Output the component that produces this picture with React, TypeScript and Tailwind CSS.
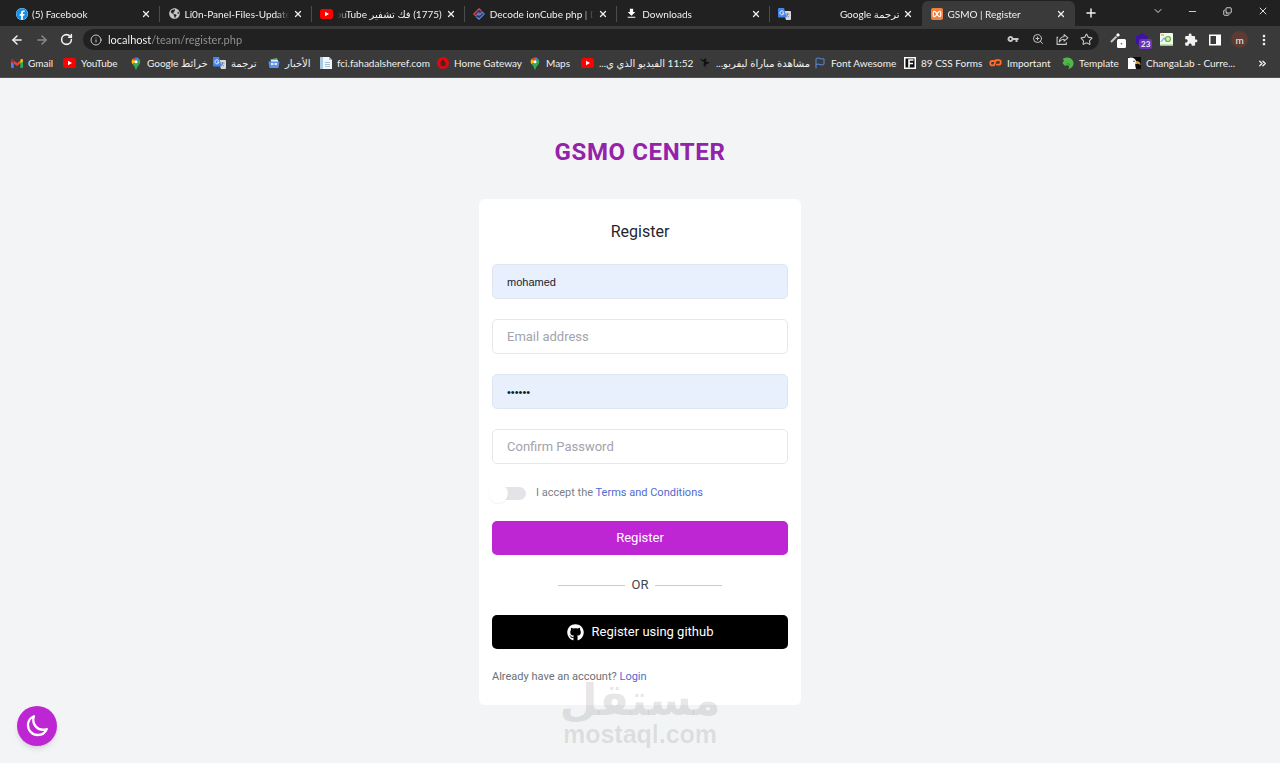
import React from "react";
import {
  ArrowLeft,
  ArrowRight,
  ChevronDown,
  ChevronsRight,
  Copy,
  Info,
  Minus,
  Plus,
  RotateCw,
  Star,
  X,
  ZoomIn,
  Flag,
} from "lucide-react";
import { FaFacebook, FaGithub, FaGlobeAmericas } from "react-icons/fa";
import { MdExtension, MdFileDownload, MdMoreVert, MdVpnKey } from "react-icons/md";

const Facebook = () => (
  <span className="flex size-3 rounded-full bg-white">
    <FaFacebook className="size-3 text-[#1490ea]" />
  </span>
);

const Youtube = () => (
  <svg viewBox="0 0 13 10" className="h-[10px] w-[13px]">
    <rect width="13" height="10" rx="2.6" fill="#f00" />
    <path d="M5 2.8v4.4L9 5z" fill="#fff" />
  </svg>
);

const Translate = () => (
  <svg viewBox="0 0 13 12" className="h-3 w-[13px]">
    <path d="M5 3h7a1 1 0 0 1 1 1v7a1 1 0 0 1-1 1H8z" fill="#d6dae0" />
    <path d="M7.5 6h4M9.5 5v1c0 1.5-1 2.5-2 3M8.5 7c.5 1 1.5 1.700 2.5 2" stroke="#6c7a90" strokeWidth=".8" fill="none" />
    <path d="M1 0h5l2.7 9.5H1a1 1 0 0 1-1-1V1a1 1 0 0 1 1-1z" fill="#4583ee" />
    <path d="M5.6 3.6A2 2 0 1 0 6 5H4.2" stroke="#fff" strokeWidth=".9" fill="none" />
  </svg>
);

const IonCube = () => (
  <svg viewBox="0 0 12 12" className="size-3">
    <path d="M6 .5 11.5 6 6 11.5.5 6z" fill="#27376b" />
    <path d="M8.5 3 6 .8.8 6l2 2L6 4.800l2 2" stroke="#d4474e" strokeWidth="1.2" fill="none" />
    <path d="M3.5 9 6 11.2 11.2 6l-2-2L6 7.2l-2-2" stroke="#4d8be0" strokeWidth="1.2" fill="none" />
  </svg>
);

const Xampp = () => (
  <svg viewBox="0 0 12 12" className="size-3">
    <rect width="12" height="12" rx="2" fill="#f0803c" />
    <path
      d="M3.8 3.3h-.3a1.2 1.2 0 0 0-1.2 1.2v3A1.2 1.2 0 0 0 3.5 8.7h.3L6 6.5l2.2 2.2h.3a1.2 1.2 0 0 0 1.2-1.2v-3a1.2 1.2 0 0 0-1.2-1.2h-.3L6 5.5z"
      stroke="#fff"
      strokeWidth="1.2"
      fill="none"
      strokeLinejoin="round"
    />
  </svg>
);

const Gmail = () => (
  <svg viewBox="0 0 12 9" className="h-[9px] w-3">
    <path d="M0 1.5V8a1 1 0 0 0 1 1h1.7V3.5z" fill="#4285f4" />
    <path d="M12 1.5V8a1 1 0 0 1-1 1H9.3V3.5z" fill="#34a853" />
    <path d="M2.7 1.5 6 4l3.3-2.5v3L6 7 2.7 4.5z" fill="#ea4335" />
    <path d="M0 1.5C0 .2 1.3-.3 2.3.5l.4.4v3.6L0 2.5z" fill="#c5221f" />
    <path d="M12 1.5C12 .2 10.7-.3 9.7.5l-.4.4v3.6L12 2.5z" fill="#fbbc04" />
  </svg>
);

const MapPin = () => (
  <svg viewBox="0 0 12 13" className="h-[13px] w-3">
    <path d="M6 .5a4.3 4.3 0 0 0-3.3 1.5L6 5z" fill="#ea4335" />
    <path d="M6 .5v4.3l3.3-2.9A4.3 4.3 0 0 0 6 .5z" fill="#4285f4" />
    <path d="M2.7 2A4.3 4.3 0 0 0 2.6 7.3L6 4.8z" fill="#fbbc04" />
    <path d="M9.3 2 2.6 7.3C3.6 8.7 5 9.5 5.3 12c.1.7 1.3.7 1.4 0C7 9 10.3 8 10.3 4.8A4 4 0 0 0 9.3 2z" fill="#34a853" />
    <circle cx="6" cy="4.8" r="1.5" fill="#fff" />
  </svg>
);

const News = () => (
  <svg viewBox="0 0 12 12" className="size-3">
    <path d="M2 2.5 9 1l1 3H3z" fill="#55b887" />
    <path d="M3 3h7v4H3z" fill="#e6edf8" />
    <path d="M.5 4.5h11L10.5 11h-9z" fill="#5b93e8" />
    <path d="M3 6h2.5v2H3zM6.5 6H9v2H6.5z" fill="#dbe7fb" />
  </svg>
);

const Document = () => (
  <svg viewBox="0 0 12 12" className="size-3">
    <path d="M0 0h3v12H0z" fill="#a9c9de" />
    <path d="M3 0h6l3 3v9H3z" fill="#f3f7fa" />
    <path d="M9 0v3h3zM5 5h5v1H5zM5 7h5v1H5zM5 9h5v1H5z" fill="#9fc0d6" />
  </svg>
);

const Gateway = () => (
  <svg viewBox="0 0 12 12" className="size-3">
    <circle cx="6" cy="6" r="6" fill="#e0090f" />
    <path d="M6.8 2C5 3 3.5 4.5 3.5 6.5a2.6 2.6 0 0 0 5.2.2c0-1.4-.8-2.3-2-2.6 0-.8 0-1.4.1-2.1z" fill="#4b2226" />
  </svg>
);

const Runner = () => (
  <svg viewBox="0 0 12 12" className="size-3">
    <path d="M1 1.5 4.5 3l2-2 1 2-1 1.5 4.5 1-3.5 2L6 8l1.5 3-3-2.5L5 5 2.5 3.5z" fill="#111" />
  </svg>
);

const CssForms = () => (
  <svg viewBox="0 0 12 12" className="size-3">
    <rect width="12" height="12" fill="#fff" />
    <path d="M1.5 1.5h9v9h-9z" fill="#111" />
    <path d="M5 10.5V3h4.5M5 6.5h4" stroke="#fff" strokeWidth="1.6" fill="none" />
  </svg>
);

const CPanel = () => (
  <svg viewBox="0 0 13 12" className="h-3 w-[13px]" fill="none" stroke="#ff6c2c" strokeWidth="1.8" strokeLinecap="round">
    <path d="M5.4 4H3.4a2.2 2.2 0 0 0 0 4.4H5L7 3.2H9.6a2.2 2.2 0 0 1 0 4.4H7.8" />
  </svg>
);

const Horse = () => (
  <svg viewBox="0 0 12 12" className="size-3">
    <path d="M.8 2C4-.5 9.5 0 11.3 4.5 12.3 8 10.5 11.5 6 12c1.5-1.5 1.7-3 0-3.8L2.8 8.8.3 6 2 4z" fill="#4fb848" />
    <path d="M4.5 7c1.5-.5 2.5-.3 3.5 1" stroke="#2c7a2c" strokeWidth=".8" fill="none" />
  </svg>
);

const Eagle = () => (
  <svg viewBox="0 0 13 12" className="h-3 w-[13px]">
    <rect width="13" height="12" fill="#0d0d0d" />
    <path d="M0 1c4-1.5 7 0 8 3l2 2-3 1.5 1 4.5H0z" fill="#fff" />
    <path d="M8 4c3 0 4.5 1.5 4.5 4L9.5 6.5 7 7z" fill="#d9993a" />
    <circle cx="6" cy="4.2" r=".7" fill="#111" />
  </svg>
);

const Crescent = () => (
  <svg viewBox="0 0 24 24" className="size-6" fill="none" stroke="currentColor" strokeWidth="2.3" strokeLinecap="round" strokeLinejoin="round">
    <path d="M21.75 15A9.7 9.7 0 0 1 18 15.75c-5.385 0-9.75-4.365-9.75-9.75 0-1.33.266-2.597.748-3.752A9.753 9.753 0 0 0 3 11.25C3 16.635 7.365 21 12.75 21a9.753 9.753 0 0 0 9-6Z" />
  </svg>
);

type Tab = { title: string; icon: React.ReactNode; rtl?: boolean; active?: boolean; rule?: boolean };

const tabs: Tab[] = [
  { title: "(5) Facebook", icon: <Facebook />, rule: true },
  { title: "Li0n-Panel-Files-Update-v", icon: <FaGlobeAmericas className="size-[11px] text-[#c4c7c9]" />, rule: true },
  { title: "(1775) فك تشفير YouTube", icon: <Youtube />, rtl: true, rule: true },
  { title: "Decode ionCube php | De", icon: <IonCube />, rule: true },
  { title: "Downloads", icon: <MdFileDownload className="size-[13px] text-white" />, rule: true },
  { title: "ترجمة Google", icon: <Translate />, rtl: true },
  { title: "GSMO | Register", icon: <Xampp />, active: true },
];

const bookmarks = [
  { title: "Gmail", icon: <Gmail />, width: "w-[53px]" },
  { title: "YouTube", icon: <Youtube />, width: "w-[66px]" },
  { title: "خرائط Google", icon: <MapPin />, width: "w-[84px]", rtl: true },
  { title: "ترجمة", icon: <Translate />, width: "w-[54px]", rtl: true },
  { title: "الأخبار", icon: <News />, width: "w-[52px]", rtl: true },
  { title: "fci.fahadalsheref.com", icon: <Document />, width: "w-[117px]" },
  { title: "Home Gateway", icon: <Gateway />, width: "w-[92px]" },
  { title: "Maps", icon: <MapPin />, width: "w-[53px]" },
  { title: "11:52 الفيديو الذي ي...", icon: <Youtube />, width: "w-[117px]", rtl: true },
  { title: "مشاهدة مباراة ليفربو...", icon: <Runner />, width: "w-[115px]", rtl: true },
  { title: "Font Awesome", icon: <Flag className="size-3 text-[#5a8fe0]" />, width: "w-[90px]" },
  { title: "89 CSS Forms", icon: <CssForms />, width: "w-[86px]" },
  { title: "Important", icon: <CPanel />, width: "w-[72px]" },
  { title: "Template", icon: <Horse />, width: "w-[67px]" },
  { title: "ChangaLab - Curre...", icon: <Eagle />, width: "w-[110px]" },
];

function TabStrip() {
  return (
    <div className="flex h-[26px] items-end justify-between bg-[#212121] pl-[7px]">
      <div className="flex w-full max-w-[1100px] items-end">
        <ul className="flex min-w-0 flex-1">
          {tabs.map((t) => (
            <li
              key={t.title}
              className={`flex h-[25px] min-w-0 flex-1 items-center gap-1 pr-2 pl-2 ${
                t.active ? "rounded-t-md bg-[#3a3a3a]" : ""
              }`}
            >
              <span className="flex w-[13px] shrink-0 justify-center">{t.icon}</span>
              <span
                dir={t.rtl ? "rtl" : "ltr"}
                className={`min-w-0 flex-1 overflow-hidden whitespace-nowrap ${
                  t.rtl
                    ? "[mask-image:linear-gradient(to_left,#000_88%,transparent)]"
                    : "[mask-image:linear-gradient(to_right,#000_88%,transparent)]"
                }`}
              >
                {t.title}
              </span>
              <button aria-label={`Close ${t.title}`} className="shrink-0">
                <X className="size-[10px]" strokeWidth={3} />
              </button>
              <span className={`-mr-2 ml-1 h-4 w-px shrink-0 ${t.rule ? "bg-[#4c4c4c]" : ""}`} />
            </li>
          ))}
        </ul>
        <button aria-label="New tab" className="flex h-[26px] w-8 items-center justify-center">
          <Plus className="size-[14px]" strokeWidth={2.5} />
        </button>
      </div>
      <div className="flex h-[26px] shrink-0 pb-1 text-[#dcdcdc]">
        <button aria-label="Search tabs" className="flex w-[35px] items-center justify-center">
          <ChevronDown className="size-3" />
        </button>
        <button aria-label="Minimize" className="flex w-[35px] items-center justify-center">
          <Minus className="size-[11px]" />
        </button>
        <button aria-label="Restore" className="flex w-[35px] items-center justify-center">
          <Copy className="size-[9px] -scale-x-100 rotate-180" strokeWidth={2.5} />
        </button>
        <button aria-label="Close window" className="flex w-[35px] items-center justify-center">
          <X className="size-3" />
        </button>
      </div>
    </div>
  );
}

function Toolbar() {
  return (
    <div className="flex h-[27px] items-center bg-[#3a3a3a] pr-1 pl-1">
      <button aria-label="Back" className="flex w-[25px] justify-center">
        <ArrowLeft className="size-[14px]" strokeWidth={2.5} />
      </button>
      <button aria-label="Forward" className="flex w-[25px] justify-center text-[#8a8a8a]">
        <ArrowRight className="size-[14px]" strokeWidth={2.5} />
      </button>
      <button aria-label="Reload" className="mr-[5px] flex w-6 justify-center">
        <RotateCw className="size-[13px]" strokeWidth={2.8} />
      </button>
      <div className="flex h-[21px] flex-1 items-center gap-[6px] rounded-full bg-[#212121] pl-[7px] text-[#c8c8c8]">
        <Info className="size-3" />
        <input
          aria-label="Address"
          defaultValue="localhost/team/register.php"
          className="min-w-0 flex-1 bg-[linear-gradient(to_right,#ffffff_43px,#969696_43px)] bg-clip-text text-[11px] text-transparent outline-none"
        />
        <div className="flex">
          <button aria-label="Passwords" className="flex w-6 justify-center">
            <MdVpnKey className="size-3" />
          </button>
          <button aria-label="Zoom" className="flex w-[25px] justify-center">
            <ZoomIn className="size-3" />
          </button>
          <button aria-label="Share" className="flex w-6 justify-center">
            <svg viewBox="0 0 24 24" className="size-[13px]" fill="none" stroke="currentColor" strokeWidth="2">
              <path d="M4 8H2v13h17v-4" />
              <path d="M15 3l7 6-7 6v-3.500c-4 0-6.500 1.500-9 5C6.500 11 9.500 7.500 15 6.500z" strokeLinejoin="round" />
            </svg>
          </button>
          <button aria-label="Bookmark" className="flex w-[25px] justify-center">
            <Star className="size-[13px]" />
          </button>
        </div>
      </div>
      <div className="ml-[6px] flex items-center">
        <button aria-label="Colour picker" className="flex w-[25px] justify-center">
          <svg viewBox="0 0 16 16" className="size-4">
            <path d="M1 10 6.5 4.5" stroke="#c9c9c9" strokeWidth="2" />
            <path d="m6 3 2-2 2 2-2 2z" fill="#fff" />
            <rect x="7" y="7" width="9" height="9" rx="1.5" fill="#fff" />
            <circle cx="11.5" cy="11.7" r=".9" fill="#777" />
          </svg>
        </button>
        <button aria-label="Extension, 23 items" className="relative flex w-6 justify-center">
          <svg viewBox="0 0 14 14" className="size-[14px]">
            <path d="M7 0 13 3.5v7L7 14 1 10.5v-7z" fill="#3f12a6" />
          </svg>
          <span className="absolute top-[6px] left-[9px] rounded-[2px] bg-[#6a35b8] px-[2px] text-[8px] leading-[10px] font-bold">23</span>
        </button>
        <button aria-label="SEO extension" className="flex w-6 justify-center">
          <svg viewBox="0 0 13 13" className="size-[13px]">
            <rect width="13" height="13" rx="1" fill="#f2f7f0" />
            <path d="M1 9 4 5l2 3 3-5" stroke="#5fbcd8" strokeWidth="1.2" fill="none" />
            <path d="M0 11.5h13V13H0z" fill="#8ad069" />
            <circle cx="8" cy="6" r="2.5" fill="#d6eea8" stroke="#62b34b" strokeWidth="1.2" />
            <path d="M1 2h3" stroke="#f0b03f" strokeWidth="1.5" />
          </svg>
        </button>
        <button aria-label="Extensions" className="flex w-[25px] justify-center">
          <MdExtension className="size-[14px]" />
        </button>
        <button aria-label="Side panel" className="flex w-6 justify-center">
          <svg viewBox="0 0 12 12" className="size-3">
            <path d="M0 .5h12v11H0z" fill="#fff" />
            <path d="M1.5 2H7v8H1.5z" fill="#3a3a3a" />
          </svg>
        </button>
        <button aria-label="Profile" className="mx-1 flex size-[17px] items-center justify-center rounded-full bg-[#5d3b32] text-[10px] leading-none">
          m
        </button>
        <button aria-label="Menu" className="flex w-6 justify-center">
          <MdMoreVert className="size-4" />
        </button>
      </div>
    </div>
  );
}

function BookmarkBar() {
  return (
    <nav aria-label="Bookmarks" className="flex h-[25px] items-center justify-between border-b border-[#505050] bg-[#3a3a3a] pr-3 pb-1 pl-[10px]">
      <ul className="flex min-w-0 overflow-hidden">
        {bookmarks.map((b) => (
          <li key={b.title} className={`shrink-0 ${b.width}`}>
            <a href="#" className="flex items-center gap-[5px] whitespace-nowrap">
              <span className="flex w-[13px] shrink-0 justify-center">{b.icon}</span>
              <span dir={b.rtl ? "rtl" : "ltr"}>{b.title}</span>
            </a>
          </li>
        ))}
      </ul>
      <button aria-label="More bookmarks">
        <ChevronsRight className="size-[11px]" strokeWidth={3} />
      </button>
    </nav>
  );
}

const fieldBase =
  "h-[35px] w-full rounded-[5px] border px-[14px] text-[#16202b] outline-none placeholder:text-[#a3a3ab]";

function Field(props: { label: string; type: string; value?: string }) {
  const filled = Boolean(props.value);
  return (
    <input
      aria-label={props.label}
      type={props.type}
      placeholder={props.label}
      defaultValue={props.value}
      className={`${fieldBase} ${
        filled ? "border-[#dfe5ee] bg-[#e8f0fe] font-['Liberation_Sans',sans-serif] text-[11px]" : "border-[#e5e7eb] bg-white text-[13px]"
      }`}
    />
  );
}

function RegisterCard() {
  return (
    <form className="flex w-full max-w-[322px] flex-col rounded-md bg-white px-[13px] pt-[21px] pb-[18px]">
      <h2 className="text-center text-[16px] leading-6 text-[#1f2630]">Register</h2>
      <div className="mt-5 flex flex-col gap-5">
        <Field label="Username" type="text" value="mohamed" />
        <Field label="Email address" type="email" />
        <Field label="Password" type="password" value="123456" />
        <Field label="Confirm Password" type="password" />
      </div>
      <div className="mt-[19px] flex items-center gap-[10px] text-[11px] leading-5 text-[#7b7f87]">
        <input
          id="terms"
          type="checkbox"
          className="relative h-[13px] w-[34px] appearance-none rounded-full bg-[#e3e4e8] before:absolute before:-top-[3px] before:-left-[3px] before:size-[19px] before:rounded-full before:bg-white before:shadow-[0_1px_2px_rgba(0,0,0,0.06)] checked:bg-[#bf26d3] checked:before:left-[18px]"
        />
        <label htmlFor="terms">
          I accept the{" "}
          <a href="#" className="text-[#4f6bd0]">
            Terms and Conditions
          </a>
        </label>
      </div>
      <button type="submit" className="mt-[18px] h-[34px] rounded-[5px] bg-[#bf26d3] text-[13px] text-white">
        Register
      </button>
      <div className="my-5 flex items-center justify-center gap-[7px] text-[13px] leading-5 text-[#3f4650]">
        <span className="h-px w-[67px] bg-[#c9cacd]" />
        OR
        <span className="h-px w-[67px] bg-[#c9cacd]" />
      </div>
      <button type="button" className="flex h-[34px] items-center justify-center gap-2 rounded-[5px] bg-black text-[13px] text-white">
        <FaGithub className="size-[17px]" />
        Register using github
      </button>
      <p className="mt-[18px] text-[11px] leading-5 text-[#6b7077]">
        Already have an account?{" "}
        <a href="#" className="text-[#4f6bd0]">
          Login
        </a>
      </p>
    </form>
  );
}

export default function App() {
  return (
    <div className="flex min-h-screen flex-col bg-[#f2f4f6] font-[Roboto,'Noto_Sans',sans-serif]">
      <header className="font-[Lato,'DejaVu_Sans',sans-serif] text-[10px] leading-[14px] text-[#f1f1f1]">
        <TabStrip />
        <Toolbar />
        <BookmarkBar />
      </header>
      <main className="relative flex flex-1 flex-col items-center gap-[31px] pt-[58px]">
        <h1 className="text-[24px] leading-8 font-bold tracking-wide text-[#9323a8]">GSMO CENTER</h1>
        <RegisterCard />
        <div
          aria-hidden="true"
          className="pointer-events-none absolute bottom-[15px] left-1/2 flex -translate-x-1/2 flex-col items-center font-bold text-black/10"
        >
          <span dir="rtl" className="font-['DejaVu_Sans',sans-serif] text-[44px] leading-[40px]">
            مستقل
          </span>
          <span className="font-['Liberation_Sans',sans-serif] text-[25px] leading-7">mostaql.com</span>
        </div>
        <button
          aria-label="Switch to dark mode"
          className="absolute bottom-[17px] left-[17px] flex size-10 items-center justify-center rounded-full bg-[#bf26d3] text-white shadow-md"
        >
          <Crescent />
        </button>
      </main>
    </div>
  );
}
